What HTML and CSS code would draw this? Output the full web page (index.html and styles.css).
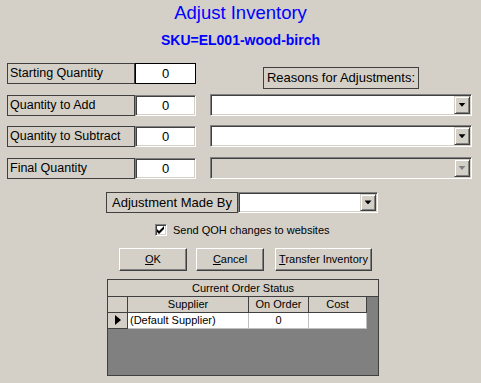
FILE: index.html
```html
<!DOCTYPE html>
<html>
<head>
<meta charset="utf-8">
<link rel="stylesheet" href="styles.css">
</head>
<body>
<div class="page">
  <h1 class="title">Adjust Inventory</h1>
  <div class="sku">SKU=EL001-wood-birch</div>

  <div class="form">
    <div class="lbl">Starting Quantity</div>
    <div class="val flat">0</div>
    <div></div>
    <div class="reasons-wrap"><div class="reasons">Reasons for Adjustments:</div></div>

    <div class="lbl">Quantity to Add</div>
    <div class="val sunken">0</div>
    <div></div>
    <div class="combo sunken"><div class="combo-field"></div><div class="combo-btn"><span class="arrow"></span></div></div>

    <div class="lbl">Quantity to Subtract</div>
    <div class="val sunken">0</div>
    <div></div>
    <div class="combo sunken"><div class="combo-field"></div><div class="combo-btn"><span class="arrow"></span></div></div>

    <div class="lbl">Final Quantity</div>
    <div class="val sunken">0</div>
    <div></div>
    <div class="combo sunken disabled"><div class="combo-field"></div><div class="combo-btn"><span class="arrow"></span></div></div>
  </div>

  <div class="made-by">
    <div class="lbl mb-lbl">Adjustment Made By</div>
    <div class="combo sunken mb-combo"><div class="combo-field"></div><div class="combo-btn"><span class="arrow"></span></div></div>
  </div>

  <div class="check-row">
    <span class="checkbox sunken">
      <svg width="8" height="8" viewBox="0 0 8 8"><path d="M0 3 L2 5 L7 0 L7 3 L2 8 L0 6 Z" fill="#000"/></svg>
    </span>
    <span class="check-text">Send QOH changes to websites</span>
  </div>

  <div class="buttons">
    <div class="btn btn-ok"><u>O</u>K</div>
    <div class="btn btn-cancel"><u>C</u>ancel</div>
    <div class="btn btn-transfer"><u>T</u>ransfer Inventory</div>
  </div>

  <div class="grid">
    <div class="grid-cap">Current Order Status</div>
    <div class="grid-row">
      <div class="cell rh hdr"></div>
      <div class="cell sup hdr">Supplier</div>
      <div class="cell ord hdr">On Order</div>
      <div class="cell cost hdr">Cost</div>
    </div>
    <div class="grid-row">
      <div class="cell rh hdr"><span class="pointer"></span></div>
      <div class="cell sup data left">(Default Supplier)</div>
      <div class="cell ord data">0</div>
      <div class="cell cost data"></div>
    </div>
  </div>
</div>
</body>
</html>
```

FILE: styles.css
```css
* { box-sizing: border-box; }
html, body { margin: 0; padding: 0; }
body {
  background: #d4d0c8;
  font-family: "Liberation Sans", Arial, sans-serif;
  color: #000;
}
.page {
  width: 481px;
  height: 383px;
  overflow: hidden;
}
.title {
  margin: 0;
  padding-top: 2px;
  font-size: 18.5px;
  font-weight: normal;
  line-height: 22px;
  color: #0000ff;
  text-align: center;
}
.sku {
  margin-top: 8px;
  font-size: 14px;
  font-weight: bold;
  line-height: 17px;
  color: #0000ff;
  text-align: center;
}

.form {
  margin-top: 14px;
  margin-left: 7px;
  display: grid;
  grid-template-columns: 128px 61px 14px 262px;
  grid-template-rows: repeat(4, 21px);
  row-gap: 10.667px;
}
.lbl {
  border: 1px solid #404040;
  padding-left: 2px;
  font-size: 12.5px;
  line-height: 19px;
  white-space: nowrap;
  height: 21px;
}
.val {
  background: #fff;
  text-align: center;
  font-size: 13px;
  line-height: 19px;
  height: 21px;
}
.flat { border: 1px solid #000; }
.sunken {
  border: 1px solid;
  border-color: #808080 #fff #fff #808080;
  box-shadow: inset 1px 1px 0 #404040, inset -1px -1px 0 #d4d0c8;
  padding: 1px;
}
.val.sunken { padding: 0; line-height: 19px; }

.reasons-wrap {
  display: flex;
  justify-content: center;
  align-items: flex-start;
  padding-top: 4px;
}
.reasons {
  border: 1px solid #404040;
  height: 22px;
  padding: 0 3px;
  font-size: 13px;
  line-height: 20px;
  white-space: nowrap;
}

.combo {
  display: flex;
  height: 22px;
  margin-top: -1px;
  background: #fff;
}
.combo-field { flex: 1; }
.combo-btn {
  width: 16px;
  height: 18px;
  background: #d4d0c8;
  border: 1px solid;
  border-color: #d4d0c8 #404040 #404040 #d4d0c8;
  box-shadow: inset 1px 1px 0 #fff, inset -1px -1px 0 #808080;
  display: flex;
  align-items: center;
  justify-content: center;
}
.arrow {
  display: block;
  width: 7px;
  height: 4px;
  background: #000;
  clip-path: polygon(0 0, 100% 0, 50% 100%);
}
.combo.disabled { background: #d4d0c8; }
.combo.disabled .arrow { background: #808080; }

.made-by {
  margin-top: 13px;
  margin-left: 106px;
  display: flex;
}
.mb-lbl {
  width: 132px;
  text-align: center;
  padding-left: 0;
  font-size: 13px;
}
.mb-combo {
  width: 140px;
  margin-top: 0;
  height: 21px;
}
.mb-combo .combo-btn { height: 17px; }

.check-row {
  margin-top: 11px;
  padding-left: 155px;
  display: flex;
  align-items: center;
  height: 13px;
}
.checkbox {
  width: 12px;
  height: 12px;
  background: #fff;
  display: flex;
  align-items: center;
  justify-content: center;
}
.checkbox svg { display: block; }
.check-text {
  margin-left: 6px;
  font-size: 11px;
  line-height: 13px;
  white-space: nowrap;
}

.buttons {
  margin-top: 11px;
  margin-left: 119px;
  display: flex;
}
.btn {
  height: 23px;
  border: 1px solid;
  border-color: #fff #404040 #404040 #fff;
  box-shadow: inset -1px -1px 0 #808080;
  background: #d4d0c8;
  font-size: 11px;
  line-height: 21px;
  text-align: center;
  white-space: nowrap;
}
.btn u { text-underline-offset: 1px; }
.btn-ok { width: 68px; }
.btn-cancel { width: 68px; margin-left: 9px; }
.btn-transfer { width: 97px; margin-left: 11px; }

.grid {
  margin-top: 8px;
  margin-left: 107px;
  width: 272px;
  height: 97px;
  border: 1px solid #404040;
  background: #808080;
}
.grid-cap {
  height: 17px;
  background: #d4d0c8;
  border-bottom: 1px solid #404040;
  text-align: center;
  font-size: 11px;
  line-height: 16px;
}
.grid-row {
  display: flex;
  height: 16px;
}
.cell {
  height: 16px;
  font-size: 11px;
  line-height: 15px;
  text-align: center;
  white-space: nowrap;
  overflow: hidden;
}
.hdr {
  background: #d4d0c8;
  border-right: 1px solid #404040;
  border-bottom: 1px solid #404040;
}
.data {
  background: #fff;
  border-right: 1px solid #c0c0c0;
  border-bottom: 1px solid #c0c0c0;
}
.left { text-align: left; padding-left: 2px; }
.rh {
  width: 20px;
  display: flex;
  align-items: center;
  justify-content: center;
}
.sup { width: 121px; }
.ord { width: 60px; }
.cost { width: 58px; }
.pointer {
  display: block;
  width: 0;
  height: 0;
  border-left: 6px solid #000;
  border-top: 5px solid transparent;
  border-bottom: 5px solid transparent;
}
```
